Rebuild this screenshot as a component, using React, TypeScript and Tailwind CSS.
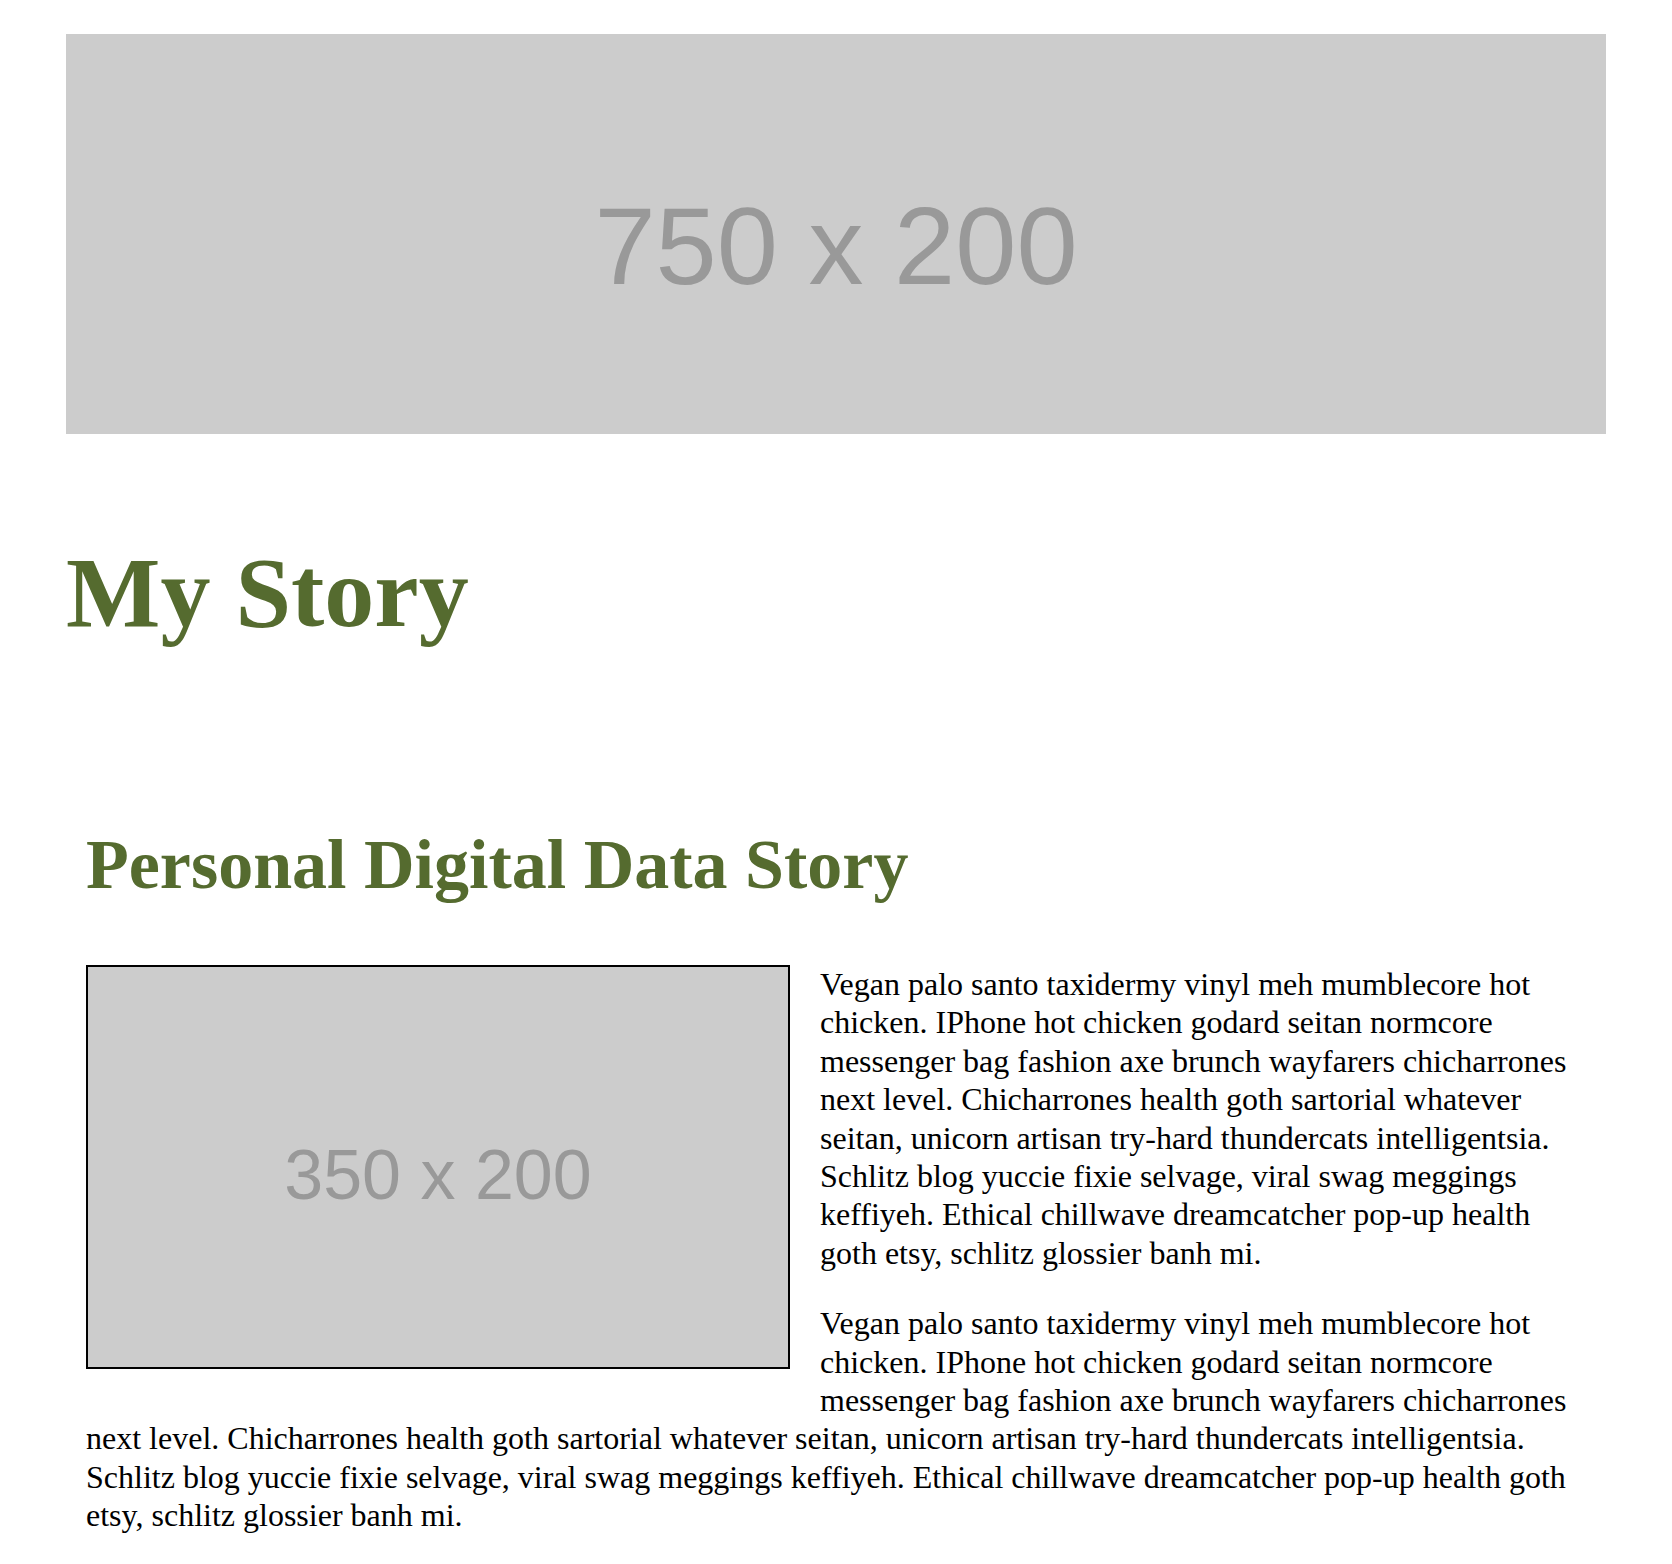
import React from "react";

const TEXT =
  "Vegan palo santo taxidermy vinyl meh mumblecore hot chicken. IPhone hot chicken godard seitan normcore messenger bag fashion axe brunch wayfarers chicharrones next level. Chicharrones health goth sartorial whatever seitan, unicorn artisan try-hard thundercats intelligentsia. Schlitz blog yuccie fixie selvage, viral swag meggings keffiyeh. Ethical chillwave dreamcatcher pop-up health goth etsy, schlitz glossier banh mi.";

export default function App() {
  return (
    <div className="min-h-[1564px] bg-white px-[66px] pt-[34px] font-['Liberation_Serif',serif] text-black">
      <div className="flex h-[400px] items-center justify-center bg-[#cccccc] pt-[24px]">
        <span className="font-['Liberation_Sans',sans-serif] text-[110px] leading-none text-[#999999]">
          750 x 200
        </span>
      </div>

      <h1 className="mt-[109px] text-[100px] font-bold leading-none text-[#556b2f]">
        My Story
      </h1>

      <section className="px-[20px]">
        <h2 className="mt-[187px] text-[70px] font-bold leading-none text-[#556b2f]">
          Personal Digital Data Story
        </h2>

        <div className="mt-[65px] flow-root text-[32px] leading-[1.2]">
          <div className="float-left mb-[30px] mr-[30px] flex h-[404px] w-[704px] items-center justify-center border-2 border-black bg-[#cccccc] pt-[15px]">
            <span className="font-['Liberation_Sans',sans-serif] text-[70px] leading-none text-[#999999]">
              350 x 200
            </span>
          </div>
          <p>{TEXT}</p>
          <p className="mt-[32px]">{TEXT}</p>
        </div>
      </section>
    </div>
  );
}
